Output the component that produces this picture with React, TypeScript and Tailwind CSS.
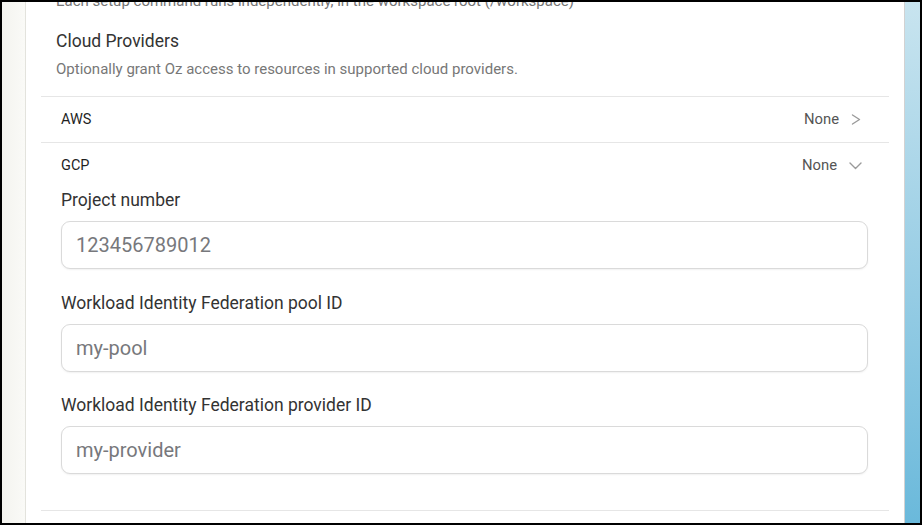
function ChevronRightIcon() {
  return (
    <svg width="10" height="11" viewBox="0 0 10 11" fill="none" className="shrink-0">
      <polyline points="1.5,1 8.5,5.5 1.5,10" stroke="#9a9a9a" strokeWidth="1.4" strokeLinecap="round" strokeLinejoin="round" />
    </svg>
  );
}

function ChevronDownIcon() {
  return (
    <svg width="13" height="8" viewBox="0 0 13 8" fill="none" className="shrink-0">
      <polyline points="1,1 6.5,6.5 12,1" stroke="#9a9a9a" strokeWidth="1.4" strokeLinecap="round" strokeLinejoin="round" />
    </svg>
  );
}

function ProviderRow({ name, open }: { name: string; open?: boolean }) {
  return (
    <div className={`flex items-center justify-between pl-[20px] ${open ? "h-[45px] pr-[27px]" : "h-[46px] pr-[28px] border-b border-[#e6e6e6]"}`}>
      <span className="text-[14.5px] text-[#1f1f1f]">{name}</span>
      <div className="flex items-center gap-[12px]">
        <span className="text-[14.8px] text-[#555555]">None</span>
        {open ? <ChevronDownIcon /> : <ChevronRightIcon />}
      </div>
    </div>
  );
}

function Field({ label, placeholder }: { label: string; placeholder: string }) {
  return (
    <div className="flex flex-col">
      <label className="text-[17.5px] leading-[24px] text-[#333333]">{label}</label>
      <input
        placeholder={placeholder}
        className="mt-[9px] h-[48px] w-full rounded-[9px] border border-[#dadada] bg-white px-[14px] text-[20px] text-[#333] placeholder:text-[#77787c] shadow-[0_1px_2px_rgba(0,0,0,0.06)] outline-none"
      />
    </div>
  );
}

export default function App() {
  return (
    <div className="w-[922px] h-[525px] bg-black pt-[2px] pl-[2px] pr-[2px] pb-[2px] font-['Roboto',sans-serif]">
      <div className="flex h-full">
        <div className="w-[24px] border-r border-[#e3e3dd] bg-gradient-to-r from-[#f4f4ef] to-[#fafaf7]" />
        <div className="flex-1 overflow-hidden bg-white border-r border-[#d2d2d2] px-[15px]">
          <div className="pl-[15px] border-b border-[#e6e6e6] pb-[17px]">
            <p className="-mt-[11px] h-[20px] whitespace-nowrap text-[15px] leading-[20px] text-[#757575]">
              Each setup command runs independently, in the workspace root (/workspace)
            </p>
            <h3 className="mt-[18px] text-[17.5px] leading-[24px] text-[#333333]">Cloud Providers</h3>
            <p className="mt-[6px] text-[15px] leading-[20px] text-[#777777]">
              Optionally grant Oz access to resources in supported cloud providers.
            </p>
          </div>
          <ProviderRow name="AWS" />
          <ProviderRow name="GCP" open />
          <div className="flex flex-col gap-[21.5px] pl-[20px] pr-[21px] pb-[36px] border-b border-[#e6e6e6]">
            <Field label="Project number" placeholder="123456789012" />
            <Field label="Workload Identity Federation pool ID" placeholder="my-pool" />
            <Field label="Workload Identity Federation provider ID" placeholder="my-provider" />
          </div>
        </div>
        <div className="w-[15px] bg-gradient-to-b from-[#c8e4ef] to-[#6ab9db]" />
      </div>
    </div>
  );
}
